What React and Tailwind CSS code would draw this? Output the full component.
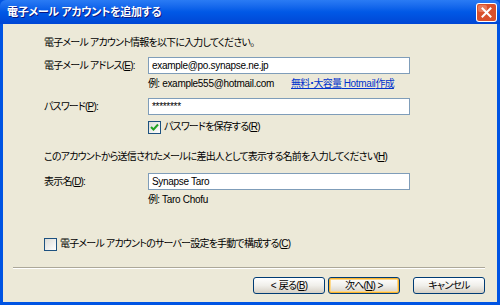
const font = "font-['Liberation_Sans','Noto_Sans_CJK_JP',sans-serif] [font-feature-settings:'palt']";

// Japanese runs are set tighter, the way MS UI Gothic sits in the dialog
const J = ({ children }) => (
  <span className="text-[10px] tracking-[-0.8px]">{children}</span>
);

// Latin runs, narrow like Tahoma 8pt
const L = ({ children }) => (
  <span className="text-[10px] tracking-[-0.3px]">{children}</span>
);

const Key = ({ k }) => (
  <J>(<u>{k}</u>)</J>
);

const CloseIcon = () => (
  <svg width="21" height="19" viewBox="0 0 21 19" className="block shrink-0">
    <rect x="0" y="0" width="21" height="19" rx="3" fill="#FFFFFF" />
    <rect x="1" y="1" width="19" height="17" rx="2" fill="#D9502C" />
    <rect x="2" y="2" width="9" height="7" rx="2" fill="#E8795A" />
    <path d="M6.5 5.5 L14.5 13.5 M14.5 5.5 L6.5 13.5" stroke="#FFFFFF" strokeWidth="2" strokeLinecap="square" />
  </svg>
);

const TextBox = ({ value }) => (
  <div className="flex h-[17px] w-[262px] shrink-0 items-center border border-[#7F9DB9] bg-white px-[3px] text-black">
    <L>{value}</L>
  </div>
);

const CheckBox = ({ checked }) => (
  <div className="flex h-[13px] w-[13px] shrink-0 items-center justify-center border border-[#1C5180] bg-[#F4F4F0] bg-linear-to-br from-[#DCDCD7] to-white">
    {checked && (
      <svg width="9" height="9" viewBox="0 0 9 9">
        <path d="M1 4 L3.5 6.5 L8 1.5" stroke="#21A121" strokeWidth="2" fill="none" />
      </svg>
    )}
  </div>
);

const XpButton = ({ children, primary }) => (
  <button className={`flex h-[17px] w-[72px] items-center justify-center whitespace-pre rounded-[3px] border border-[#003C74] bg-[#F2F1EC] bg-linear-to-b from-white via-[#F0EFEA] to-[#D6D0C5] leading-none text-black ${primary ? 'shadow-[inset_0_0_0_1px_#F8B330,inset_0_0_0_2px_#FDD889]' : ''}`}>
    {children}
  </button>
);

const Row = ({ className = '', children }) => (
  <div className={`flex h-[16px] items-center ${className}`}>{children}</div>
);

export default function App() {
  return (
    <div className={`flex h-[305px] w-[500px] flex-col overflow-hidden bg-[#0054E3] ${font}`}>
      <div className="flex h-[24px] shrink-0 items-center rounded-t-[6px] bg-[#0058E6] bg-linear-to-b from-[#2A7BF4] via-[#0058E6] to-[#0046D5] pl-[7px] pr-[3px]">
        <span className="flex-1 whitespace-nowrap text-[11px] font-bold tracking-[-0.3px] text-white [text-shadow:1px_1px_0_#0A1883]">
          電子メール アカウントを追加する
        </span>
        <CloseIcon />
      </div>

      <div className="mx-[3px] mb-[3px] flex flex-1 flex-col whitespace-nowrap bg-[#ECE9D8] text-[10px] leading-[16px] text-black">
        <div className="pl-[41px]">
          <Row className="mt-[11px]"><J>電子メール アカウント情報を以下に入力してください。</J></Row>

          <div className="mt-[6px] flex h-[17px] items-center">
            <div className="w-[104px] shrink-0"><J>電子メール アドレス</J><Key k="E" />:</div>
            <TextBox value="example@po.synapse.ne.jp" />
          </div>
          <Row className="mt-[2px] pl-[104px]">
            <span className="w-[143px] shrink-0"><J>例</J><L>: example555@hotmail.com</L></span>
            <span className="text-[#0033CC] underline"><J>無料・大容量</J><L> Hotmail</L><J>作成</J></span>
          </Row>

          <div className="mt-[6px] flex h-[17px] items-center">
            <div className="w-[104px] shrink-0"><J>パスワード</J><Key k="P" />:</div>
            <TextBox value="********" />
          </div>
          <Row className="mt-[4px] gap-[3px] pl-[104px]">
            <CheckBox checked />
            <span><J>パスワードを保存する</J><Key k="R" /></span>
          </Row>

          <Row className="mt-[14px]"><J>このアカウントから送信されたメールに差出人として表示する名前を入力してください</J><Key k="H" /></Row>

          <div className="mt-[8px] flex h-[17px] items-center">
            <div className="w-[104px] shrink-0"><J>表示名</J><Key k="D" />:</div>
            <TextBox value="Synapse Taro" />
          </div>
          <Row className="mt-[2px] pl-[104px]"><J>例</J><L>: Taro Chofu</L></Row>

          <Row className="mt-[28px] gap-[3px]">
            <CheckBox />
            <span><J>電子メール アカウントのサーバー設定を手動で構成する</J><Key k="C" /></span>
          </Row>
        </div>

        <div className="ml-[10px] mr-[12px] mt-[15px] border-t border-b border-t-[#ACA899] border-b-white" />

        <div className="mr-[12px] mt-[8px] flex h-[17px] justify-end">
          <XpButton><L>{'< '}</L><J>戻る</J><Key k="B" /></XpButton>
          <div className="ml-[3px]">
            <XpButton primary><J>次へ</J><Key k="N" /><L>{' >'}</L></XpButton>
          </div>
          <div className="ml-[13px]">
            <XpButton><J>キャンセル</J></XpButton>
          </div>
        </div>
      </div>
    </div>
  );
}
